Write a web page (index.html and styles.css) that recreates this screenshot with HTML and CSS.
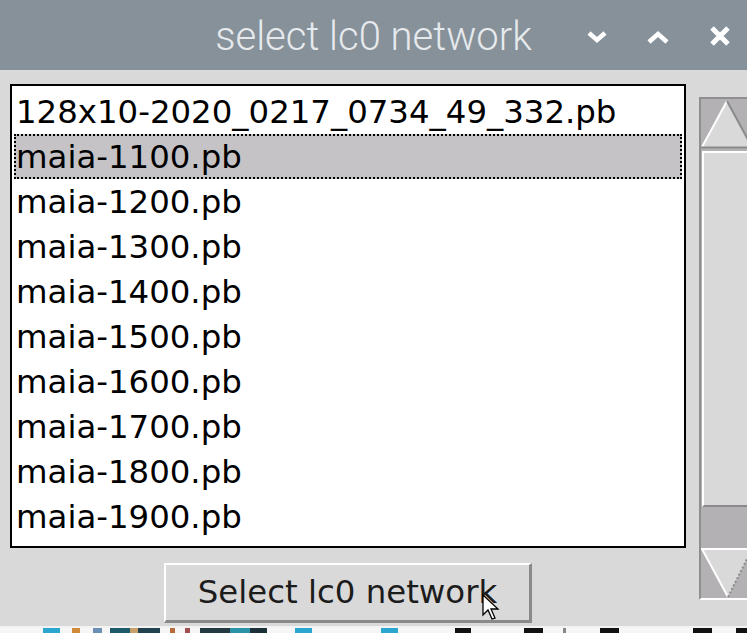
FILE: index.html
```html
<!DOCTYPE html>
<html>
<head>
<meta charset="utf-8">
<title>select lc0 network</title>
<link rel="stylesheet" href="styles.css">
</head>
<body>
<div class="window">
  <header class="titlebar">
    <div class="spacer"></div>
    <span class="title">select lc0 network</span>
    <div class="controls">
      <svg class="ctl" width="20" height="16" viewBox="0 0 20 16"><path d="M2 5 L10 12 L18 5" fill="none" stroke="#fff" stroke-width="4.5" stroke-linejoin="miter"/></svg>
      <svg class="ctl" width="22" height="16" viewBox="0 0 22 16"><path d="M2 14 L11 6 L20 14" fill="none" stroke="#fff" stroke-width="4.5" stroke-linejoin="miter"/></svg>
      <svg class="ctl" width="22" height="22" viewBox="0 0 22 22"><path d="M3 3 L19 19 M19 3 L3 19" fill="none" stroke="#fff" stroke-width="5"/></svg>
    </div>
  </header>
  <main class="body">
    <div class="top-row">
      <div class="listbox">
        <div class="row">128x10-2020_0217_0734_49_332.pb</div>
        <div class="row selected">maia-1100.pb</div>
        <div class="row">maia-1200.pb</div>
        <div class="row">maia-1300.pb</div>
        <div class="row">maia-1400.pb</div>
        <div class="row">maia-1500.pb</div>
        <div class="row">maia-1600.pb</div>
        <div class="row">maia-1700.pb</div>
        <div class="row">maia-1800.pb</div>
        <div class="row">maia-1900.pb</div>
      </div>
      <div class="scrollbar">
        <svg class="arrow" width="54" height="50" viewBox="0 0 54 50">
          <polygon points="26,2 1,48 51,48" fill="#d9d9d9"/>
          <line x1="1" y1="48" x2="26" y2="2" stroke="#ffffff" stroke-width="2"/>
          <line x1="26" y1="2" x2="51" y2="48" stroke="#8a8a8a" stroke-width="2"/>
          <line x1="0" y1="48.5" x2="54" y2="48.5" stroke="#8a8a8a" stroke-width="2"/>
        </svg>
        <div class="slider"></div>
        <svg class="arrow down" width="54" height="50" viewBox="0 0 54 50">
          <polygon points="1,1 51,1 27,49" fill="#d9d9d9"/>
          <line x1="0" y1="1" x2="54" y2="1" stroke="#ffffff" stroke-width="2"/>
          <line x1="1" y1="1" x2="27" y2="49" stroke="#ffffff" stroke-width="2"/>
          <line x1="27" y1="49" x2="51" y2="1" stroke="#8a8a8a" stroke-width="2" stroke-dasharray="2 2"/>
        </svg>
      </div>
    </div>
    <div class="button-row">
      <button class="btn">Select lc0 network</button>
    </div>
  </main>
  <div class="edge"></div>
  <div class="desktop"></div>
</div>
<svg class="cursor" width="20" height="28" viewBox="0 0 20 28">
  <path d="M1 1 L1 21 L6 16 L10 25 L13 24 L9 15 L16 15 Z" fill="#fff" stroke="#000" stroke-width="1.3" stroke-linejoin="miter"/>
</svg>
</body>
</html>
```
FILE: styles.css
```css
html, body {
  margin: 0;
  padding: 0;
  width: 747px;
  height: 633px;
  overflow: hidden;
  background: #d9d9d9;
}

.window {
  width: 747px;
  height: 633px;
  display: flex;
  flex-direction: column;
  overflow: hidden;
}

.titlebar {
  height: 70px;
  flex: none;
  background: #86919a;
  display: grid;
  grid-template-columns: 1fr auto 1fr;
  align-items: center;
}

.title {
  font-family: Roboto, "Liberation Sans", sans-serif;
  font-weight: 300;
  font-size: 40px;
  color: #e6eaed;
  line-height: 70px;
  margin-top: 2px;
}

.controls {
  display: flex;
  justify-content: flex-end;
  align-items: center;
  gap: 40px;
  padding-right: 16px;
}

.ctl {
  display: block;
}

.body {
  flex: none;
  height: 556px;
  box-sizing: border-box;
  padding: 14px 0 0 10px;
  display: flex;
  flex-direction: column;
  overflow: hidden;
}

.top-row {
  display: flex;
  align-items: flex-start;
  gap: 13px;
  width: 760px;
  height: 464px;
  flex: none;
}

.listbox {
  flex: none;
  width: 676px;
  height: 464px;
  box-sizing: border-box;
  border: 2px solid #000;
  background: #fff;
  padding: 3px 2px 0 2px;
  font-family: "DejaVu Sans", sans-serif;
  font-size: 32.4px;
  color: #000;
}

.row {
  height: 45px;
  line-height: 46px;
  white-space: nowrap;
  box-sizing: border-box;
  padding-left: 2px;
}

.row.selected {
  background: #c5c3c6;
  outline: 2px dotted #000;
  outline-offset: -2px;
}

.scrollbar {
  flex: none;
  margin-top: 13px;
  width: 56px;
  height: 503px;
  box-sizing: border-box;
  border-left: 2px solid #8f8f8f;
  border-top: 2px solid #8f8f8f;
  border-bottom: 2px solid #ffffff;
  background: #b3b1b4;
  display: flex;
  flex-direction: column;
}

.arrow {
  display: block;
  flex: none;
}

.slider {
  flex: none;
  margin: 2px 0 41px 1px;
  height: 356px;
  box-sizing: border-box;
  background: #d9d9d9;
  border-top: 2px solid #ffffff;
  border-left: 2px solid #ffffff;
  border-bottom: 2px solid #8a8a8a;
}

.button-row {
  width: 676px;
  display: flex;
  justify-content: center;
  margin-top: 15px;
}

.btn {
  width: 368px;
  height: 60px;
  box-sizing: border-box;
  background: #d9d9d9;
  border-style: solid;
  border-width: 2px 3px 3px 2px;
  border-color: #ffffff #8a8a8a #8a8a8a #ffffff;
  font-family: "DejaVu Sans", sans-serif;
  font-size: 32.4px;
  color: #1c1c1c;
  padding: 0 0 2px 0;
  margin: 0;
}

.edge {
  height: 2px;
  flex: none;
  background: #f2f2f2;
}

.desktop {
  flex: 1;
  background:
    linear-gradient(to right,
      #f6f6f6 0 43px, #2aa6cf 43px 60px, #f6f6f6 60px 72px, #d08a3c 72px 80px,
      #f6f6f6 80px 93px, #6a8fb4 93px 102px, #f6f6f6 102px 110px,
      #1d5b6a 110px 130px, #c9a06a 130px 138px, #23424f 138px 160px, #f6f6f6 160px 170px,
      #b86a3a 170px 175px, #f6f6f6 175px 185px, #a05050 185px 190px, #f6f6f6 190px 200px,
      #233a40 200px 230px, #2a93a8 230px 250px, #1b3038 250px 267px,
      #f6f6f6 267px 295px, #2aa6cf 295px 312px, #f6f6f6 312px 381px, #2aa6cf 381px 398px,
      #f6f6f6 398px 455px, #111 455px 471px, #f6f6f6 471px 524px, #111 524px 543px,
      #f6f6f6 543px 563px, #888 563px 566px, #f6f6f6 566px 600px, #111 600px 619px,
      #f6f6f6 619px 693px, #111 693px 712px, #f6f6f6 712px 736px, #111 736px 747px);
}

.cursor {
  position: absolute;
  left: 482px;
  top: 594px;
}
```
